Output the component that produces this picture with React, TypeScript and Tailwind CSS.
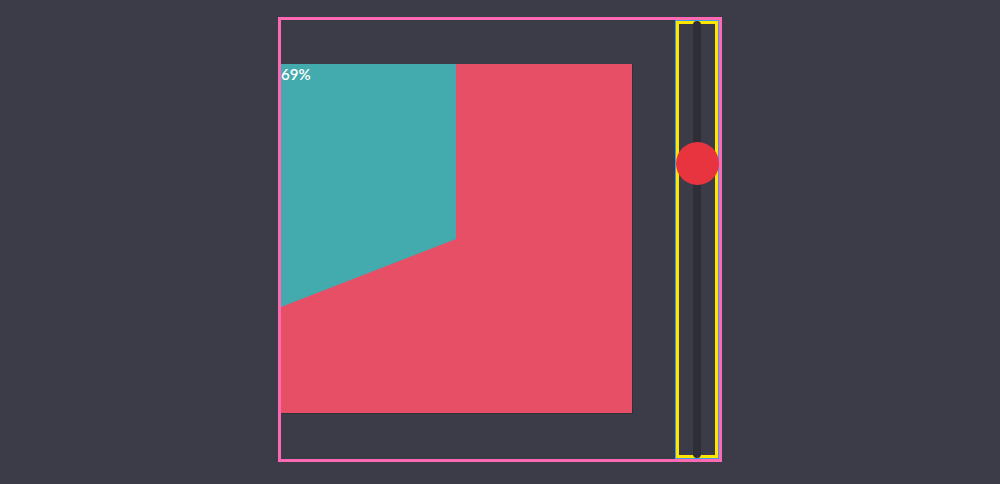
import React from "react";

const App = () => {
  const value = 69;
  const thumbTop = 121; // px from the top of the slider box

  return (
    <div
      className="w-full h-[484px] bg-[#3c3c48] flex justify-center pt-[17px]"
      style={{ fontFamily: "Lato, 'Noto Sans', sans-serif" }}
    >
      <div className="w-[444px] h-[445px] border-[3px] border-[#ff69b4] flex items-start justify-between">
        {/* Chart */}
        <div className="relative w-[351px] h-[349px] mt-[44px] bg-[#e74f66] shadow-[1px_1px_0_rgba(0,0,0,0.2)]">
          <svg
            className="absolute inset-0 w-full h-full"
            viewBox="0 0 351 349"
            preserveAspectRatio="none"
          >
            <polygon points="0,0 175,0 175,175 0,243" fill="#43aaad" />
          </svg>
          <span className="relative block text-white text-[15px] font-semibold leading-none pt-[3px]">
            {value}%
          </span>
        </div>

        {/* Vertical slider */}
        <div className="relative w-[44px] h-full border border-[#3d9ee0]">
          <div className="w-full h-full border-[3px] border-[#ffe600]" />
          <div className="absolute top-0 bottom-0 left-1/2 -translate-x-1/2 w-[8px] rounded-full bg-[#2e2e39]" />
          <div
            className="absolute left-0 w-[43px] h-[43px] rounded-full bg-[#e8343f]"
            style={{ top: thumbTop }}
          />
        </div>
      </div>
    </div>
  );
};

export default App;
